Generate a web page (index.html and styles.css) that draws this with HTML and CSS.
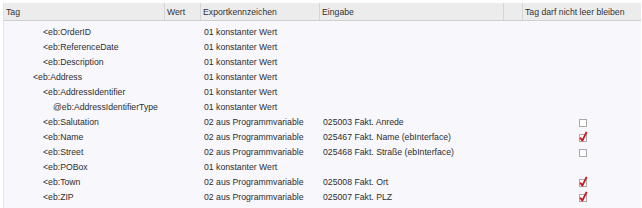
FILE: index.html
```html
<!DOCTYPE html>
<html>
<head>
<meta charset="utf-8">
<link rel="stylesheet" href="styles.css">
</head>
<body>
<div class="grid">
  <div class="head">
    <div class="hc c-tag">Tag</div>
    <div class="hc c-wert">Wert</div>
    <div class="hc c-exp">Exportkennzeichen</div>
    <div class="hc c-ein">Eingabe</div>
    <div class="hc c-blank"></div>
    <div class="hc c-req">Tag darf nicht leer bleiben</div>
  </div>
  <div class="rows">
    <div class="row"><div class="c-tag l2">&lt;eb:OrderID</div><div class="c-wert"></div><div class="c-exp">01 konstanter Wert</div><div class="c-ein"></div><div class="c-blank"></div><div class="c-req"></div></div>
    <div class="row"><div class="c-tag l2">&lt;eb:ReferenceDate</div><div class="c-wert"></div><div class="c-exp">01 konstanter Wert</div><div class="c-ein"></div><div class="c-blank"></div><div class="c-req"></div></div>
    <div class="row"><div class="c-tag l2">&lt;eb:Description</div><div class="c-wert"></div><div class="c-exp">01 konstanter Wert</div><div class="c-ein"></div><div class="c-blank"></div><div class="c-req"></div></div>
    <div class="row"><div class="c-tag l1">&lt;eb:Address</div><div class="c-wert"></div><div class="c-exp">01 konstanter Wert</div><div class="c-ein"></div><div class="c-blank"></div><div class="c-req"></div></div>
    <div class="row"><div class="c-tag l2">&lt;eb:AddressIdentifier</div><div class="c-wert"></div><div class="c-exp">01 konstanter Wert</div><div class="c-ein"></div><div class="c-blank"></div><div class="c-req"></div></div>
    <div class="row"><div class="c-tag l3">@eb:AddressIdentifierType</div><div class="c-wert"></div><div class="c-exp">01 konstanter Wert</div><div class="c-ein"></div><div class="c-blank"></div><div class="c-req"></div></div>
    <div class="row"><div class="c-tag l2">&lt;eb:Salutation</div><div class="c-wert"></div><div class="c-exp">02 aus Programmvariable</div><div class="c-ein">025003 Fakt. Anrede</div><div class="c-blank"></div><div class="c-req"><svg class="cb" width="12" height="12" viewBox="0 0 12 12"><rect x="2.5" y="3.5" width="7" height="7" fill="#fff" stroke="#a9a9a9"/></svg></div></div>
    <div class="row"><div class="c-tag l2">&lt;eb:Name</div><div class="c-wert"></div><div class="c-exp">02 aus Programmvariable</div><div class="c-ein">025467 Fakt. Name (ebInterface)</div><div class="c-blank"></div><div class="c-req"><svg class="cb" width="12" height="12" viewBox="0 0 12 12"><rect x="2.5" y="3.5" width="7" height="7" fill="#fff" stroke="#a9a9a9"/><path d="M3.2 6.6 L5.4 9.6 L9.6 0.8" fill="none" stroke="#d2141e" stroke-width="1.8" stroke-linejoin="round"/></svg></div></div>
    <div class="row"><div class="c-tag l2">&lt;eb:Street</div><div class="c-wert"></div><div class="c-exp">02 aus Programmvariable</div><div class="c-ein">025468 Fakt. Straße (ebInterface)</div><div class="c-blank"></div><div class="c-req"><svg class="cb" width="12" height="12" viewBox="0 0 12 12"><rect x="2.5" y="3.5" width="7" height="7" fill="#fff" stroke="#a9a9a9"/></svg></div></div>
    <div class="row"><div class="c-tag l2">&lt;eb:POBox</div><div class="c-wert"></div><div class="c-exp">01 konstanter Wert</div><div class="c-ein"></div><div class="c-blank"></div><div class="c-req"></div></div>
    <div class="row"><div class="c-tag l2">&lt;eb:Town</div><div class="c-wert"></div><div class="c-exp">02 aus Programmvariable</div><div class="c-ein">025008 Fakt. Ort</div><div class="c-blank"></div><div class="c-req"><svg class="cb" width="12" height="12" viewBox="0 0 12 12"><rect x="2.5" y="3.5" width="7" height="7" fill="#fff" stroke="#a9a9a9"/><path d="M3.2 6.6 L5.4 9.6 L9.6 0.8" fill="none" stroke="#d2141e" stroke-width="1.8" stroke-linejoin="round"/></svg></div></div>
    <div class="row"><div class="c-tag l2">&lt;eb:ZIP</div><div class="c-wert"></div><div class="c-exp">02 aus Programmvariable</div><div class="c-ein">025007 Fakt. PLZ</div><div class="c-blank"></div><div class="c-req"><svg class="cb" width="12" height="12" viewBox="0 0 12 12"><rect x="2.5" y="3.5" width="7" height="7" fill="#fff" stroke="#a9a9a9"/><path d="M3.2 6.6 L5.4 9.6 L9.6 0.8" fill="none" stroke="#d2141e" stroke-width="1.8" stroke-linejoin="round"/></svg></div></div>
  </div>
</div>
</body>
</html>
```

FILE: styles.css
```css
html, body {
  margin: 0;
  padding: 0;
  background: #ffffff;
}
body {
  padding: 3px 2px 0 3px;
  font-family: "Liberation Sans", Arial, sans-serif;
  font-size: 8.7px;
  color: #2e2e2e;
}
.grid {
  width: 637px;
  height: 205px;
  background: #f7f7fc;
  border-left: 1px solid #e2e2e8;
  display: flex;
  flex-direction: column;
  overflow: hidden;
}
.head, .row {
  display: grid;
  grid-template-columns: 161px 36px 119px 184px 19px 118px;
}
.head {
  height: 17px;
  background: #ececec;
  border-bottom: 1px solid #cfcfcf;
}
.hc {
  display: flex;
  align-items: center;
  padding-left: 2px;
  border-right: 1px solid #d6d6d6;
  white-space: nowrap;
  color: #333;
}
.hc.c-req { border-right: none; }
.rows {
  padding-top: 3px;
}
.row {
  height: 15px;
  align-items: center;
  white-space: nowrap;
}
.row > div {
  display: flex;
  align-items: center;
  height: 15px;
}
.row .c-exp, .row .c-ein { padding-left: 3px; }
.l1 { padding-left: 29px; }
.l2 { padding-left: 39px; }
.l3 { padding-left: 49px; }
.row .c-req { padding-left: 54px; }
.cb { display: block; }
```
